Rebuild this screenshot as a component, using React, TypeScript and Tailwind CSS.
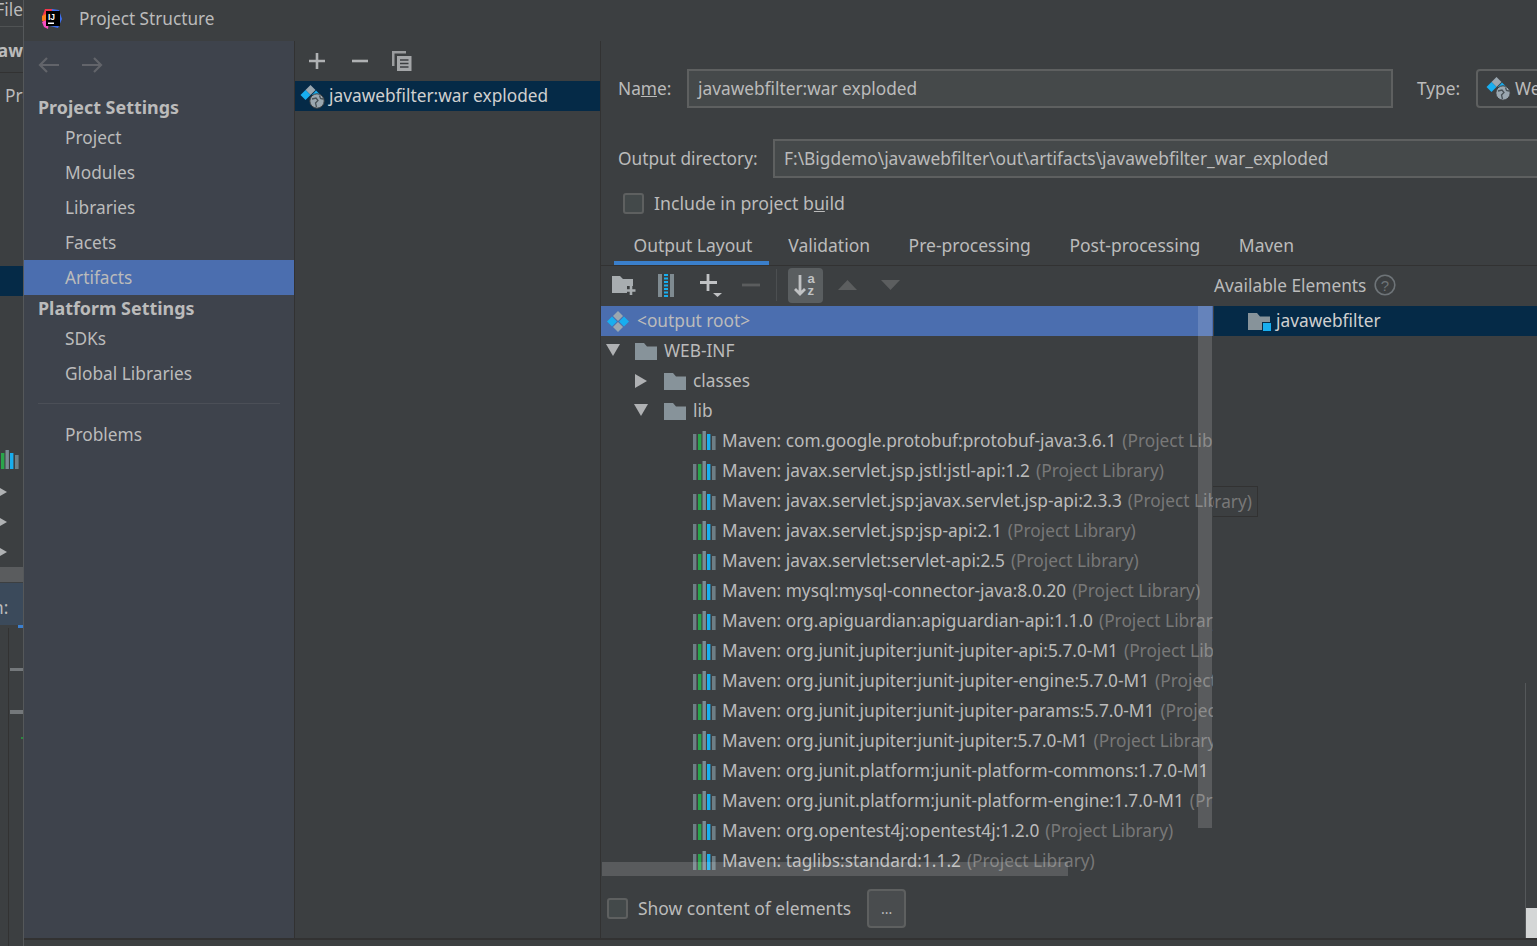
import React from 'react';

const libraries = [
  ['Maven: com.google.protobuf:protobuf-java:3.6.1', '(Project Library)'],
  ['Maven: javax.servlet.jsp.jstl:jstl-api:1.2', '(Project Library)'],
  ['Maven: javax.servlet.jsp:javax.servlet.jsp-api:2.3.3', '(Project Library)'],
  ['Maven: javax.servlet.jsp:jsp-api:2.1', '(Project Library)'],
  ['Maven: javax.servlet:servlet-api:2.5', '(Project Library)'],
  ['Maven: mysql:mysql-connector-java:8.0.20', '(Project Library)'],
  ['Maven: org.apiguardian:apiguardian-api:1.1.0', '(Project Library)'],
  ['Maven: org.junit.jupiter:junit-jupiter-api:5.7.0-M1', '(Project Library)'],
  ['Maven: org.junit.jupiter:junit-jupiter-engine:5.7.0-M1', '(Project Library)'],
  ['Maven: org.junit.jupiter:junit-jupiter-params:5.7.0-M1', '(Project Library)'],
  ['Maven: org.junit.jupiter:junit-jupiter:5.7.0-M1', '(Project Library)'],
  ['Maven: org.junit.platform:junit-platform-commons:1.7.0-M1', '(Project Library)'],
  ['Maven: org.junit.platform:junit-platform-engine:1.7.0-M1', '(Project Library)'],
  ['Maven: org.opentest4j:opentest4j:1.2.0', '(Project Library)'],
  ['Maven: taglibs:standard:1.1.2', '(Project Library)'],
];

const tabs = ['Output Layout', 'Validation', 'Pre-processing', 'Post-processing', 'Maven'];

const LibraryIcon = ({ className = '' }: { className?: string }) => (
  <svg width="23" height="19" viewBox="0 0 23 19" className={`shrink-0 ${className}`}>
    <rect x="0" y="3" width="3.4" height="16" fill="#6e7f86" />
    <rect x="5" y="3" width="3.4" height="16" fill="#2aa54b" />
    <rect x="9.5" y="0" width="3.4" height="19" fill="#7b8c94" />
    <rect x="14" y="3" width="3.4" height="16" fill="#18aeef" />
    <rect x="19" y="5" width="3.6" height="14" fill="#6e7f86" />
  </svg>
);

const FolderIcon = () => (
  <svg width="22" height="17" viewBox="0 0 22 17" className="shrink-0">
    <path d="M0 0H9L12 3.500H22V17H0Z" fill="#87939a" />
  </svg>
);

const RootIcon = () => (
  <svg width="22" height="21" viewBox="0 0 22 21" className="shrink-0">
    <path d="M11 0L16 5L11 10L6 5Z" fill="#9aa7b0" />
    <path d="M5 5.500L10 10.500L5 15.500L0 10.500Z" fill="#18aeef" />
    <path d="M17 5.500L22 10.500L17 15.500L12 10.500Z" fill="#18aeef" />
    <path d="M11 11L16 16L11 21L6 16Z" fill="#9aa7b0" />
  </svg>
);

const WarIcon = () => (
  <svg width="25" height="25" viewBox="0 0 25 25" className="shrink-0">
    <path d="M10.500 1L15.500 6L10.500 11L5.500 6Z" fill="#9aa7b0" />
    <path d="M5.500 6L10.500 11L5.500 16L0.500 11Z" fill="#18aeef" />
    <path d="M16 6.500L20.500 11H12Z" fill="#18aeef" />
    <circle cx="17" cy="17" r="7.200" fill="#9aa7b0" stroke="#3c3f41" strokeWidth="1" />
    <path d="M12 15L16 14L18 16.500L15.500 19L16.500 23M19.500 11.500L20.500 14.500L23 15" fill="none" stroke="#4a5358" strokeWidth="1.300" />
  </svg>
);

const Triangle = ({ down, className = '' }: { down?: boolean; className?: string }) => (
  <svg width="14" height="14" viewBox="0 0 14 14" className={`shrink-0 ${className}`}>
    {down ? <path d="M0 1H14L7 13Z" fill="#afb1b3" /> : <path d="M1 0L13 7L1 14Z" fill="#afb1b3" />}
  </svg>
);

const Checkbox = () => <div className="h-[21px] w-[21px] shrink-0 rounded-[3px] border-2 border-[#5e6060] bg-[#43494a]" />;

const NavItem = ({ label, selected }: { label: string; selected?: boolean }) => (
  <div className={`flex h-[35px] items-center pl-[41px] pt-[1px] ${selected ? 'bg-[#4b6eaf]' : ''}`}>{label}</div>
);

const LeftStrip = () => (
  <div className="relative flex h-full w-[23px] shrink-0 flex-col overflow-hidden bg-[#3c3f41] whitespace-nowrap">
    <div className="flex h-[27px] shrink-0 items-center justify-end border-b border-[#505354] pb-[7px]">File</div>
    <div className="flex h-[46px] shrink-0 items-center justify-end border-b border-[#323232] pt-[3px] font-bold">Jaw</div>
    <div className="mt-[10px] h-[30px] shrink-0 pl-[5px]">Project</div>
    <div className="mt-[153px] h-[30px] shrink-0 bg-[#052a47]" />
    <div className="mt-[154px] h-[19px] shrink-0">
      <LibraryIcon className="-ml-[4px]" />
    </div>
    {/* collapsed tree rows behind the dialog */}
    <div className="mt-[8px] flex h-[30px] shrink-0 items-center"><Triangle className="-ml-[6px]" /></div>
    <div className="flex h-[30px] shrink-0 items-center"><Triangle className="-ml-[6px]" /></div>
    <div className="flex h-[30px] shrink-0 items-center"><Triangle className="-ml-[6px]" /></div>
    <div className="h-[15px] shrink-0 bg-[#5a5c5e]" />
    <div className="mt-[1px] flex h-[42px] shrink-0 items-center bg-[#3b4a5b] pl-[1px] pt-[8px]"><span className="-ml-[8px]">n:</span></div>
    <div className="ml-[18px] h-[3px] w-[5px] shrink-0 bg-[#3b7fcf]" />
    <div className="ml-[8px] flex flex-1 flex-col border-l border-[#323232]">
      <div className="ml-[1px] mt-[40px] h-[3px] bg-[#74787b]" />
      <div className="ml-[1px] mt-[39px] h-[4px] bg-[#74787b]" />
      <div className="ml-[12px] mt-[23px] h-[2px] bg-[#2a8a3f]" />
    </div>
  </div>
);

const Sidebar = () => (
  <div className="flex w-[271px] shrink-0 flex-col border-r border-[#323232] bg-[#3e434c]">
    <div className="flex h-[49px] shrink-0 items-center gap-[21px] pb-[2px] pl-[14px]">
      <svg width="22" height="16" viewBox="0 0 22 16"><path d="M21 8H2M9 1L2 8L9 15" fill="none" stroke="#62646a" strokeWidth="2.200" /></svg>
      <svg width="22" height="16" viewBox="0 0 22 16"><path d="M1 8H20M13 1L20 8L13 15" fill="none" stroke="#62646a" strokeWidth="2.200" /></svg>
    </div>
    <div className="flex h-[30px] shrink-0 items-center pl-[14px] pt-[4px] text-[17.9px] font-bold">Project Settings</div>
    <NavItem label="Project" />
    <NavItem label="Modules" />
    <NavItem label="Libraries" />
    <NavItem label="Facets" />
    <NavItem label="Artifacts" selected />
    <div className="flex h-[26px] shrink-0 items-center pl-[14px] text-[17.9px] font-bold">Platform Settings</div>
    <NavItem label="SDKs" />
    <NavItem label="Global Libraries" />
    <div className="mx-[14px] mb-[13px] mt-[12px] h-px bg-[#4b4f57]" />
    <NavItem label="Problems" />
  </div>
);

const ArtifactList = () => (
  <div className="flex w-[306px] shrink-0 flex-col border-r border-[#323232]">
    <div className="flex h-[40px] shrink-0 items-center pl-[13px]">
      <svg width="18" height="18" viewBox="0 0 18 18"><path d="M9 1V17M1 9H17" stroke="#afb1b3" strokeWidth="2.600" /></svg>
      <svg width="18" height="18" viewBox="0 0 18 18" className="ml-[25px]"><path d="M1 9H17" stroke="#afb1b3" strokeWidth="2.600" /></svg>
      <svg width="20" height="20" viewBox="0 0 20 20" className="ml-[23px]">
        <path d="M0 0H14V2.500H2.500V15H0Z" fill="#9a9c9e" />
        <path d="M5 5H19.500V20H5Z" fill="#a4a6a8" />
        <path d="M8 9H16.500M8 12.500H16.500M8 16H16.500" stroke="#3c3f41" strokeWidth="1.300" />
      </svg>
    </div>
    <div className="flex h-[30px] shrink-0 items-center gap-[4px] bg-[#052a47] pl-[5px] text-[#d0d0d0]">
      <WarIcon />
      <span>javawebfilter:war exploded</span>
    </div>
  </div>
);

const OutputToolbar = () => (
  <div className="flex h-[40px] shrink-0 items-center pb-[2px]">
    <div className="flex w-[613px] shrink-0 items-center pl-[11px]">
      <svg width="24" height="20" viewBox="0 0 24 20" className="shrink-0">
        <path d="M0 1H8L11 4H21V11H15V18H0Z" fill="#a8adb0" />
        <path d="M19 11V20M14.500 15.500H23.500" stroke="#a8adb0" strokeWidth="2.600" />
      </svg>
      <svg width="16" height="23" viewBox="0 0 16 23" className="ml-[22px] shrink-0">
        <rect width="16" height="23" fill="#7f8b91" />
        <rect x="4" width="8" height="23" fill="#3c3f41" />
        <path d="M8 0V23" stroke="#18aeef" strokeWidth="4" strokeDasharray="2 1.500" />
      </svg>
      <svg width="24" height="26" viewBox="0 0 24 26" className="ml-[25px] shrink-0">
        <path d="M9 2V19M1 10.500H18" stroke="#c0c2c4" strokeWidth="2.800" />
        <path d="M14 21H23L18.500 25Z" fill="#c0c2c4" />
      </svg>
      <svg width="18" height="4" viewBox="0 0 18 4" className="ml-[19px] shrink-0"><path d="M0 2H18" stroke="#5b5d5e" strokeWidth="2.800" /></svg>
      <div className="ml-[16px] h-[32px] w-px shrink-0 bg-[#4c4f51]" />
      <div className="ml-[11px] flex h-[35px] w-[35px] shrink-0 items-center justify-center rounded-[4px] bg-[#5a5e60]">
        <svg width="26" height="26" viewBox="0 0 26 26">
          <path d="M7 3V22M2 17L7 22L12 17" fill="none" stroke="#c0c2c4" strokeWidth="2.800" />
          <text x="14.500" y="11" fontSize="13" fontWeight="700" fill="#c0c2c4" fontFamily="Liberation Sans, sans-serif">a</text>
          <text x="14.500" y="23" fontSize="13" fontWeight="700" fill="#c0c2c4" fontFamily="Liberation Sans, sans-serif">z</text>
        </svg>
      </div>
      <svg width="19" height="10" viewBox="0 0 19 10" className="ml-[15px] shrink-0"><path d="M9.500 0L19 10H0Z" fill="#5c5e5f" /></svg>
      <svg width="19" height="10" viewBox="0 0 19 10" className="ml-[24px] shrink-0"><path d="M0 0H19L9.500 10Z" fill="#5c5e5f" /></svg>
    </div>
    <span className="pt-[2px]">Available Elements</span>
    <svg width="22" height="22" viewBox="0 0 22 22" className="ml-[8px] shrink-0">
      <circle cx="11" cy="11" r="9.800" fill="none" stroke="#6e7478" strokeWidth="1.600" />
      <text x="11" y="16.500" textAnchor="middle" fontSize="15" fill="#6e7478" fontFamily="Liberation Sans, sans-serif">?</text>
    </svg>
  </div>
);

const OutputTree = () => (
  <div className="relative h-[570px] w-[612px] shrink-0 overflow-hidden whitespace-nowrap">
    <div className="flex h-[30px] items-center bg-[#4b6eaf] pl-[6px]">
      <RootIcon />
      <span className="ml-[8px]">&lt;output root&gt;</span>
    </div>
    <div className="flex h-[30px] items-center pl-[5px]">
      <Triangle down className="mb-[2px]" />
      <span className="ml-[15px]"><FolderIcon /></span>
      <span className="ml-[7px]">WEB-INF</span>
    </div>
    <div className="flex h-[30px] items-center pl-[33px]">
      <Triangle />
      <span className="ml-[16px]"><FolderIcon /></span>
      <span className="ml-[7px]">classes</span>
    </div>
    <div className="flex h-[30px] items-center pl-[33px]">
      <Triangle down className="mb-[2px]" />
      <span className="ml-[16px]"><FolderIcon /></span>
      <span className="ml-[7px]">lib</span>
    </div>
    {libraries.map(([name, kind]) => (
      <div key={name} className="flex h-[30px] items-center pl-[92px]">
        <LibraryIcon className="mb-[2px]" />
        <span className="ml-[6px]">{name}</span>
        <span className="ml-[6px] text-[#787878]">{kind}</span>
      </div>
    ))}
    {/* overlay scrollbars */}
    <div className="absolute left-[597px] top-0 h-[522px] w-[14px] bg-white/15" />
    <div className="absolute left-px top-[556px] h-[14px] w-[466px] bg-white/15" />
  </div>
);

const OutputPanel = () => (
  <div className="relative flex min-w-0 flex-1 flex-col overflow-hidden">
    <div className="mt-[28px] flex h-[39px] shrink-0 items-center pl-[17px]">
      <span className="w-[69px] shrink-0">Na<u>m</u>e:</span>
      <div className="flex h-full w-[706px] shrink-0 items-center border-2 border-[#5e6060] bg-[#45494a] pl-[9px]">javawebfilter:war exploded</div>
      <span className="ml-[24px] w-[59px] shrink-0">Type:</span>
      <div className="flex h-full w-[260px] shrink-0 items-center gap-[4px] whitespace-nowrap rounded-[4px] border-2 border-[#5e6060] pl-[8px]">
        <WarIcon />
        <span>Web Application: Exploded</span>
      </div>
    </div>
    <div className="mt-[31px] flex h-[39px] shrink-0 items-center pl-[17px]">
      <span className="w-[155px] shrink-0">Output directory:</span>
      <div className="flex h-full w-[800px] shrink-0 items-center border-2 border-[#5e6060] bg-[#45494a] pl-[9px] text-[17.35px]">F:\Bigdemo\javawebfilter\out\artifacts\javawebfilter_war_exploded</div>
    </div>
    <div className="mt-[15px] flex h-[21px] shrink-0 items-center gap-[10px] pl-[22px]">
      <Checkbox />
      <span className="text-[17.7px]">Include in project b<u>u</u>ild</span>
    </div>
    <div className="mt-[11px] flex h-[41px] shrink-0 border-b border-[#323232] pl-[13px] text-[17.5px]">
      {tabs.map((tab, i) => (
        <div key={tab} className={i === 0 ? 'flex w-[155px] items-center justify-center border-b-4 border-[#3a7fcb] pl-[3px] pt-[5px]' : 'flex items-center px-[19.25px] pt-[1px]'}>{tab}</div>
      ))}
    </div>
    <OutputToolbar />
    <div className="flex shrink-0">
      <OutputTree />
      <div className="ml-px flex-1">
        <div className="flex h-[30px] items-center bg-[#052a47] pl-[34px] text-[#d0d0d0]">
          <div className="relative mr-[6px] shrink-0">
            <FolderIcon />
            <div className="absolute -bottom-[2px] -right-[2px] h-[10px] w-[10px] border border-[#052a47] bg-[#18aeef]" />
          </div>
          <span>javawebfilter</span>
        </div>
      </div>
    </div>
    <div className="mt-[13px] flex h-[39px] shrink-0 items-center pl-[6px]">
      <Checkbox />
      <span className="ml-[10px] text-[17.45px]">Show content of elements</span>
      <div className="ml-[16px] flex h-[39px] w-[39px] items-center justify-center rounded-[4px] border-2 border-[#5e6060] bg-[#494c4e] text-[14px]">...</div>
    </div>
    {/* long tooltip of the hovered row */}
    <div className="absolute left-[612px] top-[445px] flex h-[31px] w-[45px] items-center justify-end overflow-hidden whitespace-nowrap border border-l-0 border-[#323232] pr-[5px] text-[#787878]">
      <span className="shrink-0">(Project Library)</span>
    </div>
    {/* window behind the dialog shows at the far right */}
    <div className="absolute bottom-0 left-[924px] top-[642px] w-px bg-[#55585a]" />
    <div className="absolute bottom-0 right-0 top-[867px] w-[11px] bg-[#d4d6d6]" />
  </div>
);

export default function App() {
  return (
    <div className="flex h-screen w-screen overflow-hidden bg-[#3c3f41] font-['Noto_Sans',sans-serif] text-[17.3px] text-[#bbbbbb]">
      <LeftStrip />
      <div className="flex min-w-0 flex-1 flex-col border-l border-[#55585a]">
        <div className="flex h-[41px] shrink-0 items-center pb-[4px] pl-[17px]">
          <svg width="22" height="22" viewBox="0 0 22 22" className="shrink-0">
            <path d="M1 9L4 1H12L9 12L2 14Z" fill="#f4364c" />
            <path d="M11 1L18 2L21 11L17 20L9 18Z" fill="#3d6ff0" />
            <path d="M1 14L8 11L7 21L3 19Z" fill="#f74ec0" />
            <path d="M1 8L5 6V12L1 13Z" fill="#fc801d" />
            <rect x="5" y="3" width="14" height="15" fill="#000" />
            <rect x="7" y="14.500" width="6" height="1.500" fill="#fff" />
            <text x="7" y="12" fontSize="8.500" fontWeight="700" fill="#fff" fontFamily="Liberation Sans, sans-serif">IJ</text>
          </svg>
          <span className="ml-[16px] text-[17.2px]">Project Structure</span>
        </div>
        <div className="flex min-h-0 flex-1 border-b-2 border-[#323232]">
          <Sidebar />
          <ArtifactList />
          <OutputPanel />
        </div>
        <div className="h-[6px] shrink-0" />
      </div>
    </div>
  );
}
